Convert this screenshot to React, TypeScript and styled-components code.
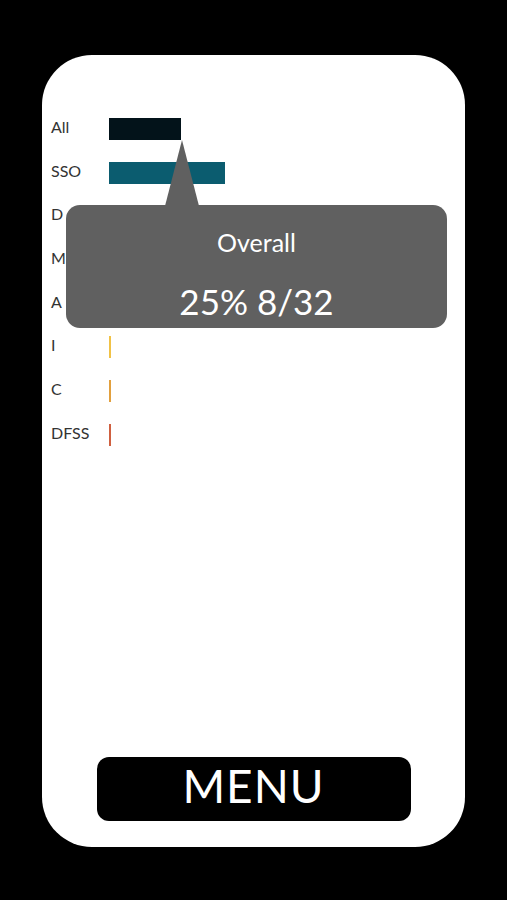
import React from "react";
import styled, { createGlobalStyle } from "styled-components";

const GlobalStyle = createGlobalStyle`
  html, body {
    margin: 0;
    padding: 0;
    background: #000000;
  }
  body {
    font-family: Lato, "Open Sans", sans-serif;
  }
`;

type Row = { label: string; width: number; color: string };

const rows: Row[] = [
  { label: "All", width: 72, color: "#03131a" },
  { label: "SSO", width: 116, color: "#0b5c6f" },
  { label: "D", width: 0, color: "#ffffff" },
  { label: "M", width: 0, color: "#ffffff" },
  { label: "A", width: 0, color: "#ffffff" },
  { label: "I", width: 2, color: "#f1c246" },
  { label: "C", width: 2, color: "#e2a03e" },
  { label: "DFSS", width: 2, color: "#cf6040" },
];

export default function App() {
  return (
    <>
      <GlobalStyle />
      <Page>
        <Card>
          <Chart>
            {rows.map((r) => (
              <ChartRow key={r.label}>
                <Label>{r.label}</Label>
                <Bar $color={r.color} style={{ width: r.width }} />
              </ChartRow>
            ))}
            <Arrow viewBox="0 0 34 66" preserveAspectRatio="none">
              <polygon points="17,0 0,66 34,66" fill="#606060" />
            </Arrow>
            <Tooltip>
              <TipTitle>Overall</TipTitle>
              <TipValue>25% 8/32</TipValue>
            </Tooltip>
          </Chart>
          <MenuButton>MENU</MenuButton>
        </Card>
      </Page>
    </>
  );
}

const Page = styled.div`
  padding: 55px 42px 53px;
  height: 900px;
  box-sizing: border-box;
`;

const Card = styled.div`
  height: 792px;
  box-sizing: border-box;
  background: #ffffff;
  border-radius: 50px;
  padding: 63px 9px 26px;
  display: flex;
  flex-direction: column;
  justify-content: space-between;
  align-items: stretch;
`;

const Chart = styled.div`
  position: relative;
  display: flex;
  flex-direction: column;
  gap: 21.7px;
`;

const ChartRow = styled.div`
  display: flex;
  align-items: center;
  height: 22px;
`;

const Label = styled.div`
  width: 58px;
  font-size: 16px;
  line-height: 20px;
  margin-bottom: 4px;
  color: #333333;
`;

const Bar = styled.div<{ $color: string }>`
  height: 22px;
  background: ${(p) => p.$color};
`;

const Arrow = styled.svg`
  position: absolute;
  left: 114px;
  top: 22px;
  width: 34px;
  height: 66px;
`;

const Tooltip = styled.div`
  position: absolute;
  left: 15px;
  top: 87px;
  width: 381px;
  height: 123px;
  box-sizing: border-box;
  background: #606060;
  border-radius: 14px;
  color: #ffffff;
  display: flex;
  flex-direction: column;
  align-items: center;
  padding-top: 22px;
`;

const TipTitle = styled.div`
  font-size: 25px;
  line-height: 30px;
`;

const TipValue = styled.div`
  font-size: 35px;
  line-height: 40px;
  margin-top: 24px;
`;

const MenuButton = styled.div`
  align-self: center;
  width: 314px;
  height: 64px;
  box-sizing: border-box;
  padding-bottom: 7px;
  background: #000000;
  border-radius: 12px;
  color: #ffffff;
  font-size: 46px;
  display: flex;
  align-items: center;
  justify-content: center;
  letter-spacing: 1px;
`;
